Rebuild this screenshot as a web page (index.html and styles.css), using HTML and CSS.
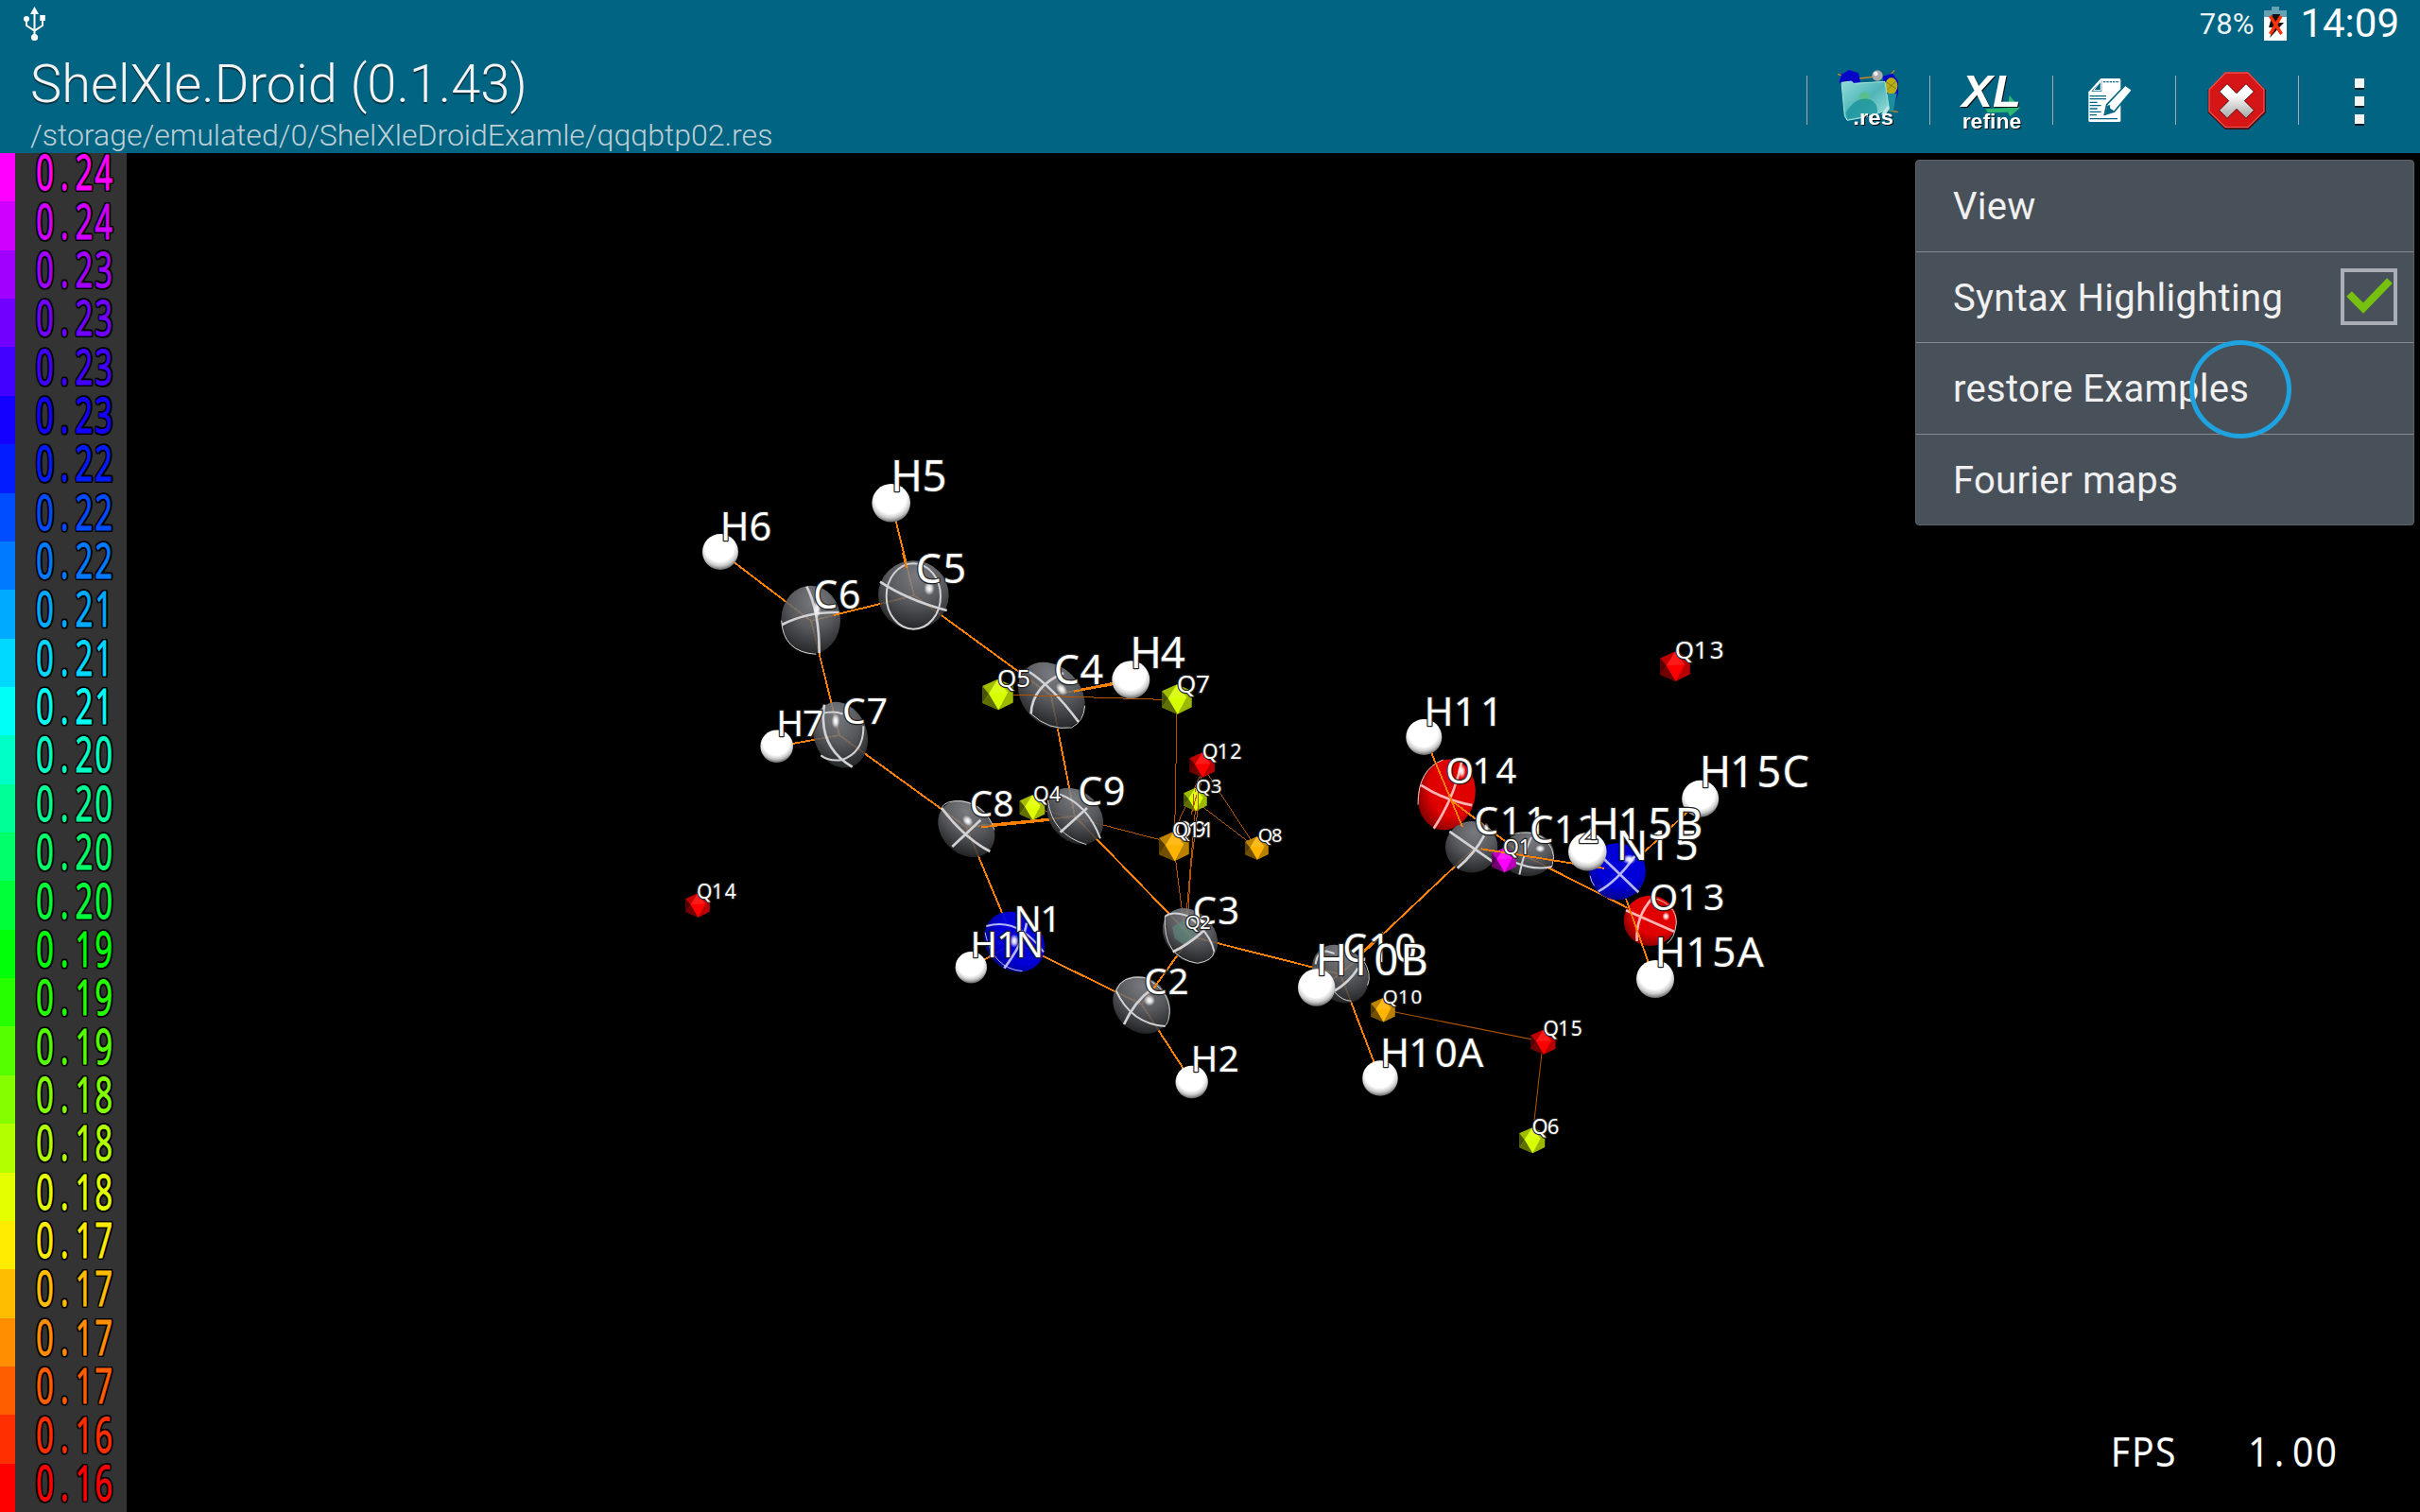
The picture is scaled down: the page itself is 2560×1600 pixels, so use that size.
FILE: index.html
```html
<!DOCTYPE html>
<html lang="en">
<head>
<meta charset="utf-8">
<title>ShelXle.Droid (0.1.43)</title>
<link rel="stylesheet" href="styles.css">
</head>
<body>
<header class="top">
  <div class="heading">
    <svg class="usb" viewBox="0 0 23 36"><g fill="none" stroke="#fff" stroke-width="2"><path d="M11.500 6V31M3 14V20L11.500 25.500L20 20V13"/></g><g fill="#fff"><path d="M11.500 0L16 8H7Z"/><circle cx="3" cy="13" r="3"/><rect x="17.300" y="9" width="5.500" height="6"/><circle cx="11.500" cy="32.500" r="3.600"/></g></svg>
    <h1>ShelXle.Droid (0.1.43)</h1>
    <p class="path">/storage/emulated/0/ShelXleDroidExamle/qqqbtp02.res</p>
  </div>
  <div class="right">
    <div class="status">
      <span class="percent">78%</span>
      <svg class="battery" viewBox="0 0 24 36"><path fill="#66a2b4" d="M8 0h8v4h8v8H0V4h8z"/><path fill="#fff" d="M0 11h24v25H0z"/><path fill="#111" d="M9 8h8l-1 9h5L6 33l4-11H5z"/><path d="M6.500 10L18.500 29M18 10L6.500 29" stroke="#f8320a" stroke-width="3.400"/></svg>
      <span class="clock">14:09</span>
    </div>
    <nav class="actions">
      <button class="action" aria-label="Open"><svg viewBox="-24 0 387 240">
        <defs><linearGradient id="folder" x1="0" y1="0" x2="1" y2="1"><stop offset="0" stop-color="#8fdcd9"/><stop offset=".5" stop-color="#50b5b8"/><stop offset="1" stop-color="#a8e5e2"/></linearGradient></defs>
        <path d="M72 37L92 45M140 51L186 46M230 52L252 25M225 150L263 158" stroke="#d08a20" stroke-width="4"/>
        <path fill="#0505c8" d="M76 64L84 38L108 24L138 34L144 62L110 76ZM215 44L246 35L264 60L264 100L248 144L226 130Z"/>
        <path fill="#001078" d="M80 68L100 55L120 78Z"/>
        <circle cx="198" cy="42" r="17" fill="#aaa"/><circle cx="193" cy="36" r="7" fill="#eee"/>
        <ellipse cx="242" cy="75" rx="20" ry="27" fill="#b9ae14"/><path d="M226 62L258 85M228 88L256 60" stroke="#5e6910" stroke-width="2"/>
        <path fill="#1c8f9e" d="M228 100L260 98L248 155L225 150Z"/>
        <path fill="url(#folder)" stroke="#a6e6df" stroke-width="3" d="M84 64L116 60L122 67L222 61L235 148L180 170L102 184L94 170Z"/>
        <circle cx="158" cy="113" r="19" fill="#59bd90"/><path fill="#159099" opacity=".75" d="M98 160Q125 110 170 116Q205 130 196 165L103 181Z"/>
        <path fill="#bfe9e6" d="M210 165L232 136L236 146L222 170Z"/>
        <text class="ico" x="121" y="198" font-size="66" textLength="128" lengthAdjust="spacingAndGlyphs">.res</text>
      </svg></button>
      <button class="action" aria-label="Refine"><svg viewBox="366 0 387 240">
        <path fill="#2ab673" d="M541 148L612 144L617 104L650 145L619 172L612 158L548 160Z"/>
        <text class="ico it" x="466" y="142" font-size="143" textLength="188" lengthAdjust="spacingAndGlyphs">XL</text>
        <text class="ico" x="467" y="209" font-size="64" textLength="188" lengthAdjust="spacingAndGlyphs">refine</text>
      </svg></button>
      <button class="action" aria-label="Edit"><svg viewBox="756 0 387 240">
        <path fill="#fff" d="M907 51H966Q970 51 970 56V185Q970 189 965 189H872Q868 189 868 184V94Z"/>
        <path d="M910 57V92H877Z" fill="#006482"/><path d="M907 60V89H884Z" fill="#006482" stroke="#fff" stroke-width="3"/>
        <path d="M915 62H966" stroke="#006482" stroke-width="4" stroke-dasharray="7 3"/>
        <path d="M872 107H924M872 116H924M872 127H896M872 137H908M872 147H896M872 157H908M872 167H894M872 179H960" stroke="#006482" stroke-width="4"/>
        <path fill="#fff" stroke="#006482" stroke-width="5" d="M985 72L1007 88L950 156L919 166L926 134Z"/>
        <path fill="#006482" d="M921 164L928 137L937 135Q932 148 945 151L948 155Z"/>
      </svg></button>
      <button class="action" aria-label="Close"><svg viewBox="1146 0 387 240">
        <defs><linearGradient id="cross" x1="0" y1="0" x2="0" y2="1"><stop offset=".3" stop-color="#fff"/><stop offset="1" stop-color="#a5a5a5"/></linearGradient></defs>
        <path fill="#420d12" d="M1303 30H1374L1431 88V160L1376 213H1302L1247 160V88Z"/>
        <path fill="#d51516" stroke="#ef5350" stroke-width="4" d="M1303 33H1374L1425 86V156L1374 206H1303L1251 156V86Z"/>
        <path fill="url(#cross)" stroke="#5e1013" stroke-width="3" d="M1308 68L1338 98L1368 68L1393 93L1363 122L1393 152L1368 178L1338 148L1308 178L1283 152L1313 122L1283 93Z"/>
      </svg></button>
      <button class="action more" aria-label="More options"><i></i><i></i><i></i></button>
    </nav>
  </div>
</header>

<main class="stage">
  <ul class="legend">
    <li style="--h:300"><b>0<u>.</u>24</b></li><li style="--h:288.9"><b>0<u>.</u>24</b></li>
    <li style="--h:277.8"><b>0<u>.</u>23</b></li><li style="--h:266.7"><b>0<u>.</u>23</b></li>
    <li style="--h:255.6"><b>0<u>.</u>23</b></li><li style="--h:244.4"><b>0<u>.</u>23</b></li>
    <li style="--h:233.3"><b>0<u>.</u>22</b></li><li style="--h:222.2"><b>0<u>.</u>22</b></li>
    <li style="--h:211.1"><b>0<u>.</u>22</b></li><li style="--h:200"><b>0<u>.</u>21</b></li>
    <li style="--h:188.9"><b>0<u>.</u>21</b></li><li style="--h:177.8"><b>0<u>.</u>21</b></li>
    <li style="--h:166.7"><b>0<u>.</u>20</b></li><li style="--h:155.6"><b>0<u>.</u>20</b></li>
    <li style="--h:144.4"><b>0<u>.</u>20</b></li><li style="--h:133.3"><b>0<u>.</u>20</b></li>
    <li style="--h:122.2"><b>0<u>.</u>19</b></li><li style="--h:111.1"><b>0<u>.</u>19</b></li>
    <li style="--h:100"><b>0<u>.</u>19</b></li><li style="--h:88.9"><b>0<u>.</u>18</b></li>
    <li style="--h:77.800"><b>0<u>.</u>18</b></li><li style="--h:66.700"><b>0<u>.</u>18</b></li>
    <li style="--h:55.600"><b>0<u>.</u>17</b></li><li style="--h:44.400"><b>0<u>.</u>17</b></li>
    <li style="--h:33.300"><b>0<u>.</u>17</b></li><li style="--h:22.200"><b>0<u>.</u>17</b></li>
    <li style="--h:11.100"><b>0<u>.</u>16</b></li><li style="--h:0"><b>0<u>.</u>16</b></li>
  </ul>

  <svg class="scene" viewBox="134 162 2426 1438">
    <defs>
      <radialGradient id="hyd" cx=".48" cy=".36" r=".66"><stop offset=".62" stop-color="#fff"/><stop offset=".8" stop-color="#ccc"/><stop offset="1" stop-color="#555"/></radialGradient>
      <radialGradient id="carb" cx=".55" cy=".22" r=".8"><stop offset="0" stop-color="#8a8b91"/><stop offset=".5" stop-color="#64666a"/><stop offset="1" stop-color="#28292b"/></radialGradient>
      <radialGradient id="carbT" cx=".3" cy=".25" r=".82"><stop offset="0" stop-color="#8a8b91"/><stop offset=".5" stop-color="#64666a"/><stop offset="1" stop-color="#28292b"/></radialGradient>
      <radialGradient id="nit" cx=".55" cy=".35" r=".7"><stop offset=".6" stop-color="#0000e4"/><stop offset="1" stop-color="#000086"/></radialGradient>
      <radialGradient id="oxy" cx=".6" cy=".35" r=".72"><stop offset=".6" stop-color="#e80000"/><stop offset="1" stop-color="#7a0000"/></radialGradient>
      <radialGradient id="spot"><stop offset="0" stop-color="#fff"/><stop offset=".4" stop-color="#fff" stop-opacity=".8"/><stop offset="1" stop-color="#fff" stop-opacity="0"/></radialGradient>
      <symbol id="ico" viewBox="-50 -50 100 100" overflow="visible">
        <path fill="currentColor" d="M0 -49L49 -28V26L2 49L-49 27V-27Z"/>
        <path fill="#fff" opacity=".1" d="M0 -49L-29 -3L32 -6Z"/>
        <path opacity=".22" d="M0 -49L49 -28L32 -6Z"/>
        <path opacity=".26" d="M0 -49L-49 -27L-29 -3Z"/>
        <path opacity=".28" d="M49 -28V26L2 49L32 -6Z"/>
        <path opacity=".68" d="M-49 -27V27L-29 -3Z"/>
        <path opacity=".56" d="M-49 27L2 49L-29 -3Z"/>
      </symbol>
    </defs>

    <!-- covalent bonds -->
    <path class="bond" d="M943 532L967 630M967 630L858 657M762 584L858 657L888 778M822 790L888 778L1022 875L1137 864L1112 736L967 630M1112 736L1196 719M1022 875L1073 997L1208 1063L1260 991L1137 864M1073 997L1027 1024M1208 1063L1261 1145M1260 991L1418 1031L1559 898M1418 1031L1460 1141M1418 1031L1393 1045M1612 905L1742 971M1559 898L1612 905"/>

    <g transform="translate(720 460) scale(.33333)">
      <ellipse class="c" cx="739" cy="509" rx="112" ry="109"/><ellipse class="arc thin" cx="739" cy="513" rx="86" ry="104"/><path class="arc" d="M633 467Q720 525 845 558"/><ellipse class="spot" cx="789" cy="488" rx="17" ry="22"/>
      <ellipse class="c" cx="413" cy="588" rx="94" ry="109"/><path class="arc" d="M322 603Q400 562 503 564M400 482Q440 560 440 693"/><path class="rim" d="M320 590Q325 690 430 697"/><ellipse class="spot" cx="433" cy="553" rx="12" ry="30"/>
      <ellipse class="c" cx="507" cy="953" rx="84" ry="107" transform="rotate(-20 507 953)"/><path class="arc" d="M456 857Q435 990 545 1055"/><path class="arc thin" d="M447 885Q490 875 515 887M580 925Q582 1010 510 1033Q470 1037 445 1018"/><ellipse class="spot" cx="492" cy="909" rx="13" ry="24"/>
    </g>
    <path class="bond" d="M882 651L931 639M959 601L955 585"/>

    <g transform="translate(1000 560) scale(.33333)">
      <ellipse class="ct" cx="337" cy="528" rx="118" ry="92" transform="rotate(45 337 528)"/><path class="arc" d="M262 450Q340 500 423 612M272 586Q275 500 375 457"/><path class="rim" d="M272 586Q330 640 400 630Q440 610 443 560"/><ellipse class="spot" cx="369" cy="508" rx="15" ry="23" transform="rotate(-40 369 508)"/>
      <path class="bond fat" d="M408 515L550 490"/>
      <path class="qbond" d="M217 526L690 541M735 585L728 960"/>
    </g>
    <g transform="translate(920 800) scale(.33333)">
      <path class="qbond" d="M540 170L652 196L925 267M1055 50L965 240M1055 50L1020 350L1006 560M1035 150L1000 560M1055 30L1225 290M1035 145L1225 290M967 300L1000 560"/>
      <ellipse class="ct" cx="652" cy="191" rx="100" ry="78" transform="rotate(45 652 191)"/><path class="arc" d="M605 242L690 165"/><path class="arc thin" d="M598 120Q690 150 732 262"/><path class="rim" d="M565 140Q580 250 688 281"/>
      <ellipse class="ct" cx="307" cy="231" rx="100" ry="79" transform="rotate(45 307 231)"/><path class="arc" d="M228 165Q300 260 382 303M262 288L352 203"/><path class="rim" d="M228 165Q240 140 290 143Q370 155 396 235"/><ellipse class="spot" cx="311" cy="206" rx="15" ry="20" transform="rotate(-40 311 206)"/>
      <path class="bond fat" d="M354 226L570 204"/>
      <ellipse class="n" cx="459" cy="590" rx="103" ry="88" transform="rotate(45 459 590)"/><path class="nArc" d="M427 674Q490 590 498 530"/><path class="nArc thin" d="M370 540Q470 510 552 622"/><path class="nArc rim" d="M366 560Q390 675 485 683"/><ellipse class="spot" cx="459" cy="587" rx="15" ry="22"/>
      <ellipse class="ct" cx="863" cy="790" rx="98" ry="84" transform="rotate(45 863 790)"/><path class="arc" d="M807 852Q840 780 895 740"/><path class="arc thin" d="M782 745Q830 850 938 858"/><path class="rim" d="M782 745Q800 695 870 703Q950 740 952 810Q950 850 935 858"/><ellipse class="spot" cx="888" cy="776" rx="18" ry="18"/>
      <path class="bond fat" d="M902 737L975 634"/>
      <ellipse class="ct" cx="1017" cy="571" rx="98" ry="76" transform="rotate(45 1017 571)"/><path fill="#5e8c80" opacity=".6" d="M960 542L1000 520L1040 548L1037 580L1003 602L968 580Z"/><path class="arc" d="M962 622Q1010 600 1062 553"/><path class="arc thin" d="M937 510Q960 490 1010 508Q1080 560 1093 620"/><path class="rim" d="M937 510Q930 640 1040 658Q1090 650 1093 620"/>
    </g>
    <g transform="translate(1340 700) scale(.33333 .34439)">
      <ellipse class="o" cx="571" cy="409" rx="90" ry="110" transform="rotate(15 571 409)"/><path class="oArc" d="M490 380Q560 425 652 442M530 513Q595 420 618 310"/><path class="oArc rim" d="M480 440Q480 330 560 302"/><ellipse class="spot" cx="619" cy="337" rx="13" ry="22"/>
      <path class="bond fat" d="M583 425L815 595"/>
      <ellipse class="c" cx="828" cy="592" rx="84" ry="68"/><path class="arc thin" d="M802 655Q815 590 840 540M775 612Q850 645 905 630"/><path class="rim" d="M775 535Q800 520 850 528Q905 550 911 600L905 630"/><ellipse class="spot" cx="868" cy="575" rx="16" ry="12"/>
      <ellipse class="c" cx="650" cy="570" rx="83" ry="79"/><path class="arc" d="M580 522L718 615M605 635Q660 590 690 535"/><ellipse class="spot" cx="697" cy="515" rx="9" ry="20"/>
      <path class="bond fat" d="M505 240L621 508"/>
      <use href="#ico" x="713" y="571" width="80" height="78" color="#f0f"/>
      <path class="qbond" d="M370 1070L877 1168L842 1472"/>
      <ellipse class="ct" cx="233" cy="960" rx="98" ry="80" transform="rotate(45 233 960)"/><path class="arc thin" d="M155 930Q160 890 190 890L215 897"/><path class="arc" d="M215 1012Q262 985 290 942"/><path class="rim" d="M215 1015Q240 1043 268 1043M305 915Q335 960 320 995"/>
      <path class="bond fat" d="M303 892L370 833"/>
    </g>
    <g transform="translate(1560 660) scale(.33333)">
      <path class="bond fat" d="M460 797L700 575"/>
      <circle class="n" cx="453" cy="787" r="90"/><path class="nArc" d="M392 850Q450 820 508 738M405 742L520 853"/><path class="nArc rim" d="M366 800Q370 820 380 832"/><ellipse class="spot" cx="490" cy="748" rx="22" ry="16"/>
      <ellipse class="o" cx="557" cy="943" rx="84" ry="80"/><path class="oArc" d="M480 910L633 977M515 1008Q510 930 565 870"/><path class="oArc rim" d="M565 870Q640 890 640 950Q635 1000 610 1015"/><ellipse class="spot" cx="607" cy="929" rx="12" ry="14"/>
      <path class="bond fat" d="M22 715L412 777M480 873L560 1100"/>
    </g>

    <g fill="url(#hyd)">
      <circle cx="942.700" cy="532.300" r="20.300"/><circle cx="762" cy="584" r="19"/><circle cx="821.700" cy="789.700" r="17.300"/><circle cx="1196.300" cy="719.300" r="20"/><circle cx="1027.300" cy="1023.700" r="16.700"/><circle cx="1260.700" cy="1145" r="17.200"/><circle cx="1506.300" cy="780" r="19"/><circle cx="1392.700" cy="1045" r="19.700"/><circle cx="1460" cy="1141" r="18.800"/><circle cx="1798.700" cy="845.300" r="19.500"/><circle cx="1679.300" cy="901.300" r="20.300"/><circle cx="1751" cy="1036" r="20"/>
    </g>

    <!-- residual density peaks -->
    <use href="#ico" x="1039" y="718.500" width="33" height="33" color="#d8ff00"/>
    <use href="#ico" x="1229" y="724" width="32" height="32" color="#d8ff00"/>
    <use href="#ico" x="1078" y="841" width="28" height="27" color="#e2ff00"/>
    <use href="#ico" x="1258" y="796" width="27.500" height="27" color="#f00"/>
    <use href="#ico" x="1252" y="833.500" width="25" height="25" color="#d8ff00"/>
    <use href="#ico" x="1317" y="885" width="25" height="25" color="#ffb400"/>
    <use href="#ico" x="1226" y="879" width="32" height="33" color="#ffb400"/>
    <use href="#ico" x="1450" y="1055.500" width="26" height="26.500" color="#ffb400"/>
    <use href="#ico" x="1619" y="1089.500" width="27" height="26.500" color="#f00"/>
    <use href="#ico" x="1607" y="1192.500" width="27.500" height="28.500" color="#d8ff00"/>
    <use href="#ico" x="1756" y="689" width="32" height="32.500" color="#f00"/>
    <use href="#ico" x="725" y="945" width="26" height="26" color="#f00"/>
    <path class="qbond px" d="M1269 825L1264 838M1267 825V858M1266 841L1260 862M1263 858L1262 840"/>

    <!-- atom labels, one x per monospaced cell -->
    <g class="labels" transform="translate(.8 0)">
      <text font-size="45.500" y="520" x="958.300 987.600">H5</text>
      <text font-size="41.600" y="572" x="776.300 803.700">H6</text>
      <text font-size="41" y="643.500" x="872.500 898">C6</text>
      <text font-size="43" y="616.500" x="981.500 1009">C5</text>
      <text font-size="39" y="766" x="902.500 927">C7</text>
      <text font-size="39" y="779" x="835 859.300">H7</text>
      <text font-size="43" y="723.500" x="1127.500 1154">C4</text>
      <text font-size="45.500" y="706.500" x="1211.300 1240">H4</text>
      <text font-size="41" y="851.700" x="1152.500 1178">C9</text>
      <text font-size="38.500" y="864" x="1037 1060.700">C8</text>
      <text font-size="38.500" y="986" x="1086.300 1110.700">N1</text>
      <text font-size="38.500" y="1013.300" x="1040 1064.500 1088.700">H1N</text>
      <text font-size="40" y="977.500" x="1273.500 1299">C3</text>
      <text font-size="38.500" y="1051.500" x="1221.700 1245.700">C2</text>
      <text font-size="38.500" y="1134" x="1273.300 1299">H2</text>
      <text font-size="42" y="768.200" x="1521.300 1549 1577.300">H11</text>
      <text font-size="38" y="829" x="1543.300 1567.500 1592.700">O14</text>
      <text font-size="40.500" y="883.300" x="1571.500 1597.500 1624">C11</text>
      <text font-size="39.500" y="892" x="1630 1654.500 1679.700">C12</text>
      <text font-size="44" y="909.500" x="1725.700 1754 1783.300">N15</text>
      <text font-size="45.500" y="887.700" x="1695.300 1724 1755.500 1785.700">H15B</text>
      <text font-size="45" y="833" x="1813.700 1842 1870.700 1899">H15C</text>
      <text font-size="39" y="962.500" x="1759.300 1785 1812.300">O13</text>
      <text font-size="44" y="1023.300" x="1766 1795 1823 1851">H15A</text>
      <text font-size="41" y="1018" x="1432.500 1458.500 1486.300">C10</text>
      <text font-size="45" y="1032.300" x="1407.700 1437.700 1465.700 1495.300">H10B</text>
      <text font-size="42" y="1129.400" x="1474.700 1501.500 1529 1555">H10A</text>
      <text font-size="26" y="727" x="1064.300 1082">Q5</text>
      <text font-size="26" y="733.300" x="1254.300 1271.700">Q7</text>
      <text font-size="21.500" y="848" x="1100.700 1115.300">Q4</text>
      <text font-size="21.500" y="803" x="1279.300 1293 1306.500">Q12</text>
      <text font-size="20.500" y="839.300" x="1272.300 1285.700">Q3</text>
      <text font-size="20" y="891.300" x="1337.700 1350">Q8</text>
      <text font-size="23" y="885.700" x="1251 1268.300">Q9</text>
      <text font-size="22" y="885.700" x="1247.700 1262.300 1277">Q11</text>
      <text font-size="20.500" y="983" x="1261 1274">Q2</text>
      <text font-size="21.500" y="903.700" x="1597.500 1612">Q1</text>
      <text font-size="26" y="697.300" x="1781 1798.300 1815.500">Q13</text>
      <text font-size="20.500" y="1062" x="1470 1484 1497.500">Q10</text>
      <text font-size="21" y="1096.300" x="1640 1653.500 1667">Q15</text>
      <text font-size="22" y="1200" x="1628.300 1642.300">Q6</text>
      <text font-size="21" y="951" x="744.500 758.300 772">Q14</text>
      <text class="plain" font-size="43.500" transform="translate(2242 1552) scale(.9 1)" y="0" x="0 26.700 53.300 107 162.600 187 214.800 242.200">FPS 1.00</text>
    </g>
  </svg>
</main>

<div class="menu">
  <div class="item">View</div>
  <div class="item">Syntax Highlighting
    <svg class="check" viewBox="0 0 60 60"><rect x="2" y="2" width="56" height="56" fill="none" stroke="#abafb5" stroke-width="4"/><path d="M9 27L24 42L52 13" fill="none" stroke="#76c010" stroke-width="8"/></svg>
  </div>
  <div class="item">restore Examples</div>
  <div class="item">Fourier maps</div>
  <span class="touch"></span>
</div>
</body>
</html>
```
FILE: styles.css
```css
* { box-sizing: border-box; margin: 0; padding: 0; }
body {
  width: 2560px; height: 1600px; overflow: hidden; position: relative;
  background: #000; color: #f3f3f3;
  font-family: Roboto, "Noto Sans", sans-serif;
  display: flex; flex-direction: column;
}
.top { height: 162px; background: #006482; display: flex; justify-content: space-between; }
.heading { padding: 7px 0 0 32px; }
.usb { display: block; width: 23px; height: 36px; margin-left: -7px; }
.heading h1 {
  font-size: 56px; line-height: 66px; font-weight: 300; margin-top: 13px;
  white-space: nowrap; text-shadow: 0 2px 1px rgba(0,0,0,.5);
}
.path { font-size: 32px; line-height: 38px; font-weight: 300; margin-top: 2px; color: #bfcfd6; white-space: nowrap; }
.right { width: 649px; display: flex; flex-direction: column; }
.status { height: 50px; padding-right: 22px; display: flex; justify-content: flex-end; align-items: center; }
.percent { font-size: 31px; margin-right: 11px; color: #eef4f6; }
.battery { width: 24px; height: 36px; margin-right: 14px; }
.clock { font-size: 42px; line-height: 48px; color: #fff; }
.actions { display: flex; height: 112px; padding-top: 16px; }
.action { width: 130px; height: 80px; border: 0; background: none; display: flex; position: relative; }
.action::before { content: ""; width: 1px; height: 52px; margin-top: 14px; background: #8db6c3; box-shadow: 1px 0 #20546a; flex: none; }
.action svg { width: 129px; height: 80px; }
.more { width: 129px; display: grid; grid-template-columns: 1px 1fr; grid-template-rows: repeat(3, 10px); row-gap: 9px; justify-items: center; padding-top: 17px; }
.more::before { grid-row: 1 / 4; margin-top: -3px; }
.more i { grid-column: 2; width: 10px; height: 10px; background: #f4f4f4; box-shadow: 0 2px #041d28; }
.ico { font-family: "Liberation Sans", sans-serif; font-weight: 700; fill: #fff; filter: drop-shadow(3px 3px 0 #111); }
.it { font-style: italic; }

.stage { flex: 1; display: flex; min-height: 0; }
.legend { width: 134px; background: #333; list-style: none; display: flex; flex-direction: column; }
.legend li { flex: 1; border-left: 16px solid hsl(var(--h) 100% 50%); color: hsl(var(--h) 100% 50%); display: flex; align-items: center; min-height: 0; }
.legend b {
  flex: none; margin-left: 22px; font: 400 51.500px/51px "Noto Sans", sans-serif; letter-spacing: 3px; white-space: nowrap;
  transform: translateY(-6px) scaleX(.64); transform-origin: 0 50%;
  -webkit-text-stroke: .8px currentColor;
  text-shadow: 3px 0 #000, -3px 0 #000, 0 2px #000, 0 -2px #000, 2px 2px #000, -2px 2px #000, 2px -2px #000, -2px -2px #000;
}
.legend u { text-decoration: none; display: inline-block; width: 32.500px; text-align: center; }
.scene { width: 2426px; height: 1438px; flex: none; }

.bond { fill: none; stroke: #ff8000; stroke-width: 1.900; shape-rendering: crispEdges; }
.fat { stroke-width: 5.500; }
.qbond { fill: none; stroke: #b35500; stroke-width: 3; shape-rendering: crispEdges; }
.px { stroke-width: 1; }
.c { fill: url(#carb); fill-opacity: .88; }
.ct { fill: url(#carbT); fill-opacity: .88; }
.n { fill: url(#nit); fill-opacity: .94; }
.o { fill: url(#oxy); fill-opacity: .97; }
.arc, .nArc, .oArc { fill: none; stroke: #d2d2d4; stroke-width: 8; }
.nArc { stroke: #b4b4ff; }
.oArc { stroke: #ffb4b4; }
.thin { stroke-width: 6; }
.rim { fill: none; stroke: #ddd; stroke-width: 2.800; }
.rim.nArc { stroke: #c4c4ff; }
.spot { fill: url(#spot); }
.labels { font-family: "Noto Sans", sans-serif; fill: #fff; text-anchor: middle; stroke: #222; stroke-width: 2.400; paint-order: stroke; stroke-linejoin: round; }
.plain { stroke: none; }

.menu {
  position: absolute; left: 2026px; top: 169px; width: 528px; height: 387px;
  background: #485059; border: 1px solid #5c6266; border-radius: 4px;
  display: flex; flex-direction: column;
}
.item {
  flex: 1; padding: 2px 17px 0 39px; display: flex; align-items: center; justify-content: space-between;
  font-size: 40px; letter-spacing: .3px; color: #f0f0f0; white-space: nowrap;
}
.item + .item { border-top: 1px solid #868b90; }
.check { width: 60px; height: 60px; margin-top: -2px; }
.touch { position: absolute; left: 289px; top: 190px; width: 108px; height: 104px; border: 5px solid #1fa2e0; border-radius: 50%; }
```
